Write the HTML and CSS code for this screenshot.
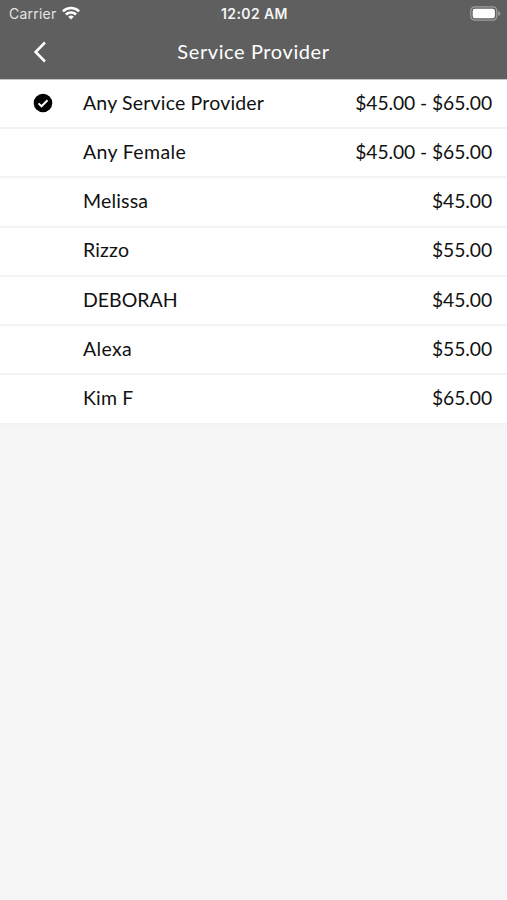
FILE: index.html
```html
<!DOCTYPE html>
<html lang="en">
<head>
<meta charset="utf-8">
<title>Service Provider</title>
<link rel="stylesheet" href="styles.css">
</head>
<body>
<header class="header">
  <div class="status">
    <div class="carrier"><span>Carrier</span>
      <svg class="wifi" viewBox="0 0 18 14" width="18" height="14" fill="none" stroke="#fff" stroke-width="2.5"><path d="M.9 5.4a11.5 11.5 0 0 1 16.2 0M3.9 8.5a7.2 7.2 0 0 1 10.2 0"/><path d="M9 13.6 6.2 10.8a4 4 0 0 1 5.6 0z" fill="#fff" stroke="none"/></svg>
    </div>
    <span class="time">12:02 AM</span>
    <svg class="battery" viewBox="0 0 31 15" width="31" height="15"><rect x=".8" y=".8" width="26" height="13.4" rx="4" fill="none" stroke="#a0a0a0" stroke-width="1.2"/><rect x="2.7" y="2.7" width="22.2" height="9.6" rx="2.2" fill="#fff"/><path d="M28.3 5v5c1.2-.4 2-1.4 2-2.5s-.8-2.1-2-2.5z" fill="#a0a0a0"/></svg>
  </div>
  <nav class="nav">
    <svg class="back" viewBox="0 0 14 22" width="14" height="22" fill="none" stroke="#fff" stroke-width="2.5"><path d="M12 1.5 2.6 11 12 20.5"/></svg>
    <h1 class="title">Service Provider</h1>
  </nav>
</header>
<main class="list">
  <div class="row"><svg class="check" viewBox="0 0 20 20" width="20" height="20"><circle cx="10" cy="10" r="9.3" fill="#000"/><path d="m5.5 10.4 3 2.9 6-6" fill="none" stroke="#fff" stroke-width="2"/></svg><span class="name">Any Service Provider</span><span class="price">$45.00 - $65.00</span></div>
  <div class="row"><span class="name loose">Any Female</span><span class="price">$45.00 - $65.00</span></div>
  <div class="row"><span class="name">Melissa</span><span class="price">$45.00</span></div>
  <div class="row"><span class="name">Rizzo</span><span class="price">$55.00</span></div>
  <div class="row"><span class="name caps">DEBORAH</span><span class="price">$45.00</span></div>
  <div class="row"><span class="name loose">Alexa</span><span class="price">$55.00</span></div>
  <div class="row"><span class="name">Kim F</span><span class="price">$65.00</span></div>
</main>
</body>
</html>
```
FILE: styles.css
```css
* { box-sizing: border-box; }
body { margin: 0; min-height: 900px; background: #f6f6f6; color: #111; font-family: Lato, sans-serif; }
.header { height: 80px; background: #5f5f5f; color: #fff; border-bottom: 1px solid #c4c4c4; }
.status { display: grid; grid-template-columns: 1fr auto 1fr; align-items: center; height: 28px; padding: 0 6px 0 9px; font: 14px/28px Inter, sans-serif; }
.carrier { display: flex; align-items: center; gap: 6px; color: #e4e4e4; letter-spacing: .22px; }
.wifi { margin-top: -2px; }
.time { margin-right: 1px; font-weight: 600; letter-spacing: .4px; color: #f4f4f4; }
.battery { justify-self: end; margin-top: -2px; }
.nav { display: grid; grid-template-columns: 1fr auto 1fr; align-items: center; height: 48px; }
.back { margin-left: 33px; }
.title { margin: -2px 0 0; font-size: 20px; font-weight: 400; line-height: 46px; letter-spacing: .6px; }
.row { display: grid; grid-template-columns: 83px 1fr auto; align-items: center; height: 49.3px; padding: 0 15px 1.9px 0; background: #fff; border-bottom: 2px solid #f3f3f3; font-size: 19.5px; line-height: 24px; }
.row:first-child { height: 49px; padding-bottom: 1px; }
.check { margin-left: 33px; }
.name { grid-column: 2; letter-spacing: .18px; }
.loose { letter-spacing: .36px; }
.caps { letter-spacing: 0; }
.price { font-size: 19.3px; letter-spacing: -.08px; }
```
